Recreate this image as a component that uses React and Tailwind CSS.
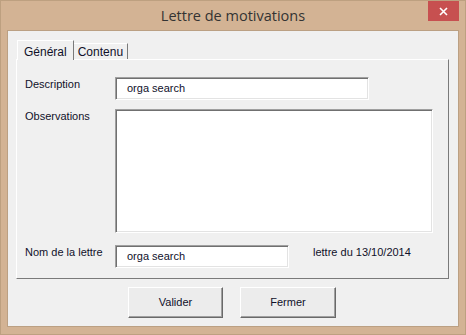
import React from "react";

function SunkenBox({ className = "", children }) {
  return (
    <div
      className={
        "bg-white border border-t-[#a0a0a0] border-l-[#a0a0a0] border-r-white border-b-white shadow-[inset_1px_1px_0_#707070,inset_-1px_-1px_0_#e3e3e3] " +
        className
      }
    >
      {children}
    </div>
  );
}

function DialogButton({ children, className = "" }) {
  return (
    <button
      className={
        "h-[31px] bg-[#ececec] border border-t-white border-l-white border-r-[#696969] border-b-[#696969] shadow-[inset_-1px_-1px_0_#a0a0a0] text-[11px] text-[#10102a] " +
        className
      }
    >
      {children}
    </button>
  );
}

export default function App() {
  return (
    <div
      className="w-[466px] h-[335px] bg-[#d3b394] border border-[#bda080] flex flex-col overflow-hidden"
      style={{ fontFamily: "'Liberation Sans', Arial, sans-serif" }}
    >
      {/* Title bar */}
      <div className="h-[29px] grid grid-cols-[1fr_auto_1fr] items-start shrink-0">
        <div />
        <div
          className="text-[14.5px] text-[#333] mt-[4px]"
          style={{ fontFamily: "'Open Sans', 'Noto Sans', sans-serif" }}
        >
          Lettre de motivations
        </div>
        <div className="flex justify-end pr-[6px]">
          <div className="w-[31px] h-[20px] bg-[#c75050] flex items-center justify-center">
            <svg width="9" height="9" viewBox="0 0 9 9">
              <path d="M1 1L8 8M8 1L1 8" stroke="#fff" strokeWidth="1.6" />
            </svg>
          </div>
        </div>
      </div>

      {/* Client area */}
      <div className="mx-[6px] mb-[7px] flex-1 bg-[#f0f0f0] border border-[#bba083] flex flex-col text-[11px] text-[#10102a]">
        {/* Tabs */}
        <div className="flex items-end pl-[9px] pt-[8px] h-[28px] shrink-0">
          <div className="relative z-10 -mb-px h-[20px] px-[6px] bg-[#f0f0f0] border-t border-l border-white border-r border-r-[#7a7a7a] flex items-start pt-[2px] text-[12px]">
            Général
          </div>
          <div className="h-[16px] px-[4px] bg-[#f0f0f0] border-t border-white border-r border-r-[#7a7a7a] flex items-center text-[12px]">
            Contenu
          </div>
        </div>

        {/* Tab page */}
        <div className="ml-[8px] mr-[9px] h-[220px] border-t border-l border-white border-r border-b border-r-[#7a7a7a] border-b-[#7a7a7a] pt-[17px] pl-[8px] flex flex-col">
          <div className="flex items-start h-[23px]">
            <div className="w-[90px] -mt-[1px]">Description</div>
            <SunkenBox className="w-[254px] h-[23px] flex items-center pl-[11px]">
              <span>orga search</span>
            </SunkenBox>
          </div>

          <div className="flex items-start mt-[9px]">
            <div className="w-[90px] -mt-[1px]">Observations</div>
            <SunkenBox className="w-[318px] h-[124px]" />
          </div>

          <div className="flex items-start mt-[12px] h-[23px]">
            <div className="w-[90px] -mt-[1px]">Nom de la lettre</div>
            <SunkenBox className="w-[174px] h-[23px] flex items-center pl-[11px]">
              <span>orga search</span>
            </SunkenBox>
            <div className="ml-[24px] -mt-[1px]">lettre du 13/10/2014</div>
          </div>
        </div>

        {/* Buttons */}
        <div className="flex gap-[17px] mt-[8px] pl-[120px]">
          <DialogButton className="w-[95px]">Valider</DialogButton>
          <DialogButton className="w-[96px]">Fermer</DialogButton>
        </div>
      </div>
    </div>
  );
}
